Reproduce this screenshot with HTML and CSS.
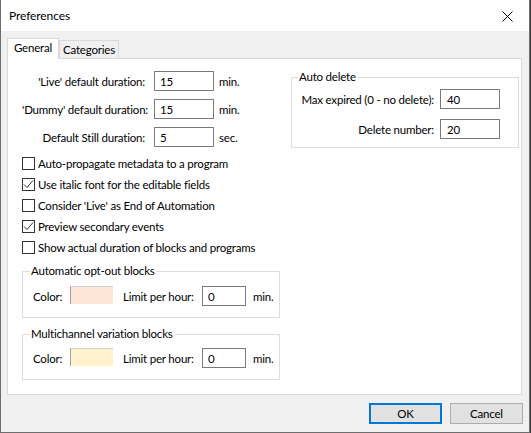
FILE: index.html
```html
<!DOCTYPE html>
<html>
<head>
<meta charset="utf-8">
<title>Preferences</title>
<link rel="stylesheet" href="styles.css">
</head>
<body>
<div class="window">
  <div class="titlebar">
    <span class="title">Preferences</span>
    <span class="close">
      <svg width="11" height="11" viewBox="0 0 11 11"><path d="M0.5 0.5 L10.5 10.5 M10.5 0.5 L0.5 10.5" stroke="#000" stroke-width="1" fill="none"/></svg>
    </span>
  </div>
  <div class="body">
    <div class="tabs">
      <div class="tab tab-active">General</div>
      <div class="tab">Categories</div>
    </div>
    <div class="panel">
      <div class="col-left">
        <div class="durations">
          <span class="lbl">'Live' default duration:</span><input class="field field-60" type="text" value="15"><span>min.</span>
          <span class="lbl">'Dummy' default duration:</span><input class="field field-60" type="text" value="15"><span>min.</span>
          <span class="lbl">Default Still duration:</span><input class="field field-60" type="text" value="5"><span>sec.</span>
        </div>
        <div class="checks">
          <div class="check"><span class="box"></span>Auto-propagate metadata to a program</div>
          <div class="check"><span class="box"><svg width="11" height="11" viewBox="0 0 11 11"><path d="M1 5.5 L4 8.5 L10 1.5" stroke="#333" stroke-width="1" fill="none"/></svg></span>Use italic font for the editable fields</div>
          <div class="check"><span class="box"></span>Consider 'Live' as End of Automation</div>
          <div class="check"><span class="box"><svg width="11" height="11" viewBox="0 0 11 11"><path d="M1 5.5 L4 8.5 L10 1.5" stroke="#333" stroke-width="1" fill="none"/></svg></span>Preview secondary events</div>
          <div class="check"><span class="box"></span>Show actual duration of blocks and programs</div>
        </div>
        <fieldset class="group group-first">
          <legend>Automatic opt-out blocks</legend>
          <div class="color-row">
            <span class="c-lbl">Color:</span>
            <span class="swatch swatch-pink"></span>
            <span class="l-lbl">Limit per hour:</span>
            <input class="field field-44" type="text" value="0">
            <span>min.</span>
          </div>
        </fieldset>
        <fieldset class="group group-second">
          <legend>Multichannel variation blocks</legend>
          <div class="color-row">
            <span class="c-lbl">Color:</span>
            <span class="swatch swatch-yellow"></span>
            <span class="l-lbl">Limit per hour:</span>
            <input class="field field-44" type="text" value="0">
            <span>min.</span>
          </div>
        </fieldset>
      </div>
      <div class="col-right">
        <fieldset class="autodel">
          <legend>Auto delete</legend>
          <div class="autodel-grid">
            <span class="lbl">Max expired (0 - no delete):</span><input class="field field-60 field-r" type="text" value="40">
            <span class="lbl">Delete number:</span><input class="field field-60 field-r" type="text" value="20">
          </div>
        </fieldset>
      </div>
    </div>
    <div class="buttons">
      <button class="btn btn-default">OK</button>
      <button class="btn">Cancel</button>
    </div>
  </div>
</div>
</body>
</html>
```
FILE: styles.css
```css
html, body {
  margin: 0;
  padding: 0;
  background: #3c3c3c;
}
body {
  font-family: Lato, "Liberation Sans", sans-serif;
  font-size: 11.5px;
  letter-spacing: -0.2px;
  color: #000;
}
.window {
  width: 530px;
  height: 433px;
  box-sizing: border-box;
  border: 1px solid #6e6e6e;
  border-top: none;
  background: #f0f0f0;
  display: flex;
  flex-direction: column;
}
.titlebar {
  height: 31px;
  background: #fff;
  display: flex;
  align-items: center;
  justify-content: space-between;
  padding: 0 16px 0 8px;
  flex: none;
}
.title {
  line-height: 16px;
  font-size: 12px;
  letter-spacing: -0.1px;
}
.close {
  display: flex;
  width: 11px;
  height: 11px;
  margin-top: 1px;
}
.body {
  flex: 1;
  padding: 7px 7px 0 6px;
  display: flex;
  flex-direction: column;
}
.tabs {
  display: flex;
  align-items: flex-end;
  height: 21px;
  margin-bottom: -1px;
  position: relative;
  z-index: 1;
}
.tab {
  box-sizing: border-box;
  height: 19px;
  border: 1px solid #d9d9d9;
  padding: 0 2px;
  line-height: 18px;
  background: #f0f0f0;
  width: 60px;
  text-align: center;
  white-space: nowrap;
}
.tab-active {
  height: 21px;
  width: 52px;
  background: #fff;
  border-bottom: none;
  line-height: 17px;
}
.panel {
  box-sizing: border-box;
  width: 515px;
  height: 337px;
  background: #fff;
  border: 1px solid #d9d9d9;
  padding: 12px 0 0 14px;
  display: flex;
  align-items: flex-start;
  gap: 11px;
}
.col-left {
  width: 258px;
  display: flex;
  flex-direction: column;
}
.durations {
  display: grid;
  grid-template-columns: 123px 60px auto;
  column-gap: 9px;
  row-gap: 8px;
  align-items: center;
}
.durations > span:nth-child(3n) {
  margin-left: -4px;
}
.lbl {
  text-align: right;
  white-space: nowrap;
}
.field {
  box-sizing: border-box;
  height: 20px;
  border: 1px solid #7a7a7a;
  background: #fff;
  font: inherit;
  letter-spacing: inherit;
  color: #000;
  padding: 1px 0 0 5px;
  margin: 0;
  outline: none;
}
.field-60 { width: 60px; }
.field-44 { width: 44px; }
.field-r { padding-left: 6px; }
.checks {
  margin-top: 6px;
  display: flex;
  flex-direction: column;
}
.check {
  height: 21px;
  display: flex;
  align-items: center;
  gap: 3px;
  white-space: nowrap;
}
.box {
  box-sizing: border-box;
  width: 13px;
  height: 13px;
  border: 1px solid #333;
  background: #fff;
  display: flex;
  flex: none;
}
.group {
  margin: 0;
  padding: 7px 10px 11px 10px;
  border: 1px solid #dcdcdc;
  min-width: 0;
  box-sizing: border-box;
  width: 258px;
}
.group legend {
  padding: 0 1px;
  margin-left: -3px;
  line-height: 16px;
}
.group-first { margin-top: 5px; }
.group-second { margin-top: 8px; padding-top: 6px; }
.color-row {
  display: flex;
  align-items: center;
  height: 20px;
  white-space: nowrap;
}
.c-lbl { width: 37px; flex: none; }
.swatch {
  box-sizing: border-box;
  width: 43px;
  height: 18px;
  flex: none;
  border-left: 1px solid #a0a0a0;
  border-top: 1px solid #d0d0d0;
  align-self: flex-start;
  margin-right: 10px;
}
.swatch-pink { background: #fce4d6; }
.swatch-yellow { background: #fff2cc; }
.l-lbl { width: 79px; flex: none; }
.color-row .field { margin-right: 7px; flex: none; }
.col-right {
  margin-top: -2px;
}
.autodel {
  margin: 0;
  width: 228px;
  box-sizing: border-box;
  border: 1px solid #dcdcdc;
  padding: 4px 18px 8px 6px;
  min-width: 0;
}
.autodel legend {
  padding: 0 1px;
  line-height: 16px;
}
.autodel-grid {
  display: grid;
  grid-template-columns: 136px 60px;
  column-gap: 6px;
  row-gap: 10px;
  align-items: center;
}
.buttons {
  display: flex;
  justify-content: flex-end;
  gap: 8px;
  padding: 8px 0 0 0;
  margin-right: -1px;
}
.btn {
  box-sizing: border-box;
  width: 73px;
  height: 21px;
  background: #e1e1e1;
  border: 1px solid #adadad;
  font: inherit;
  letter-spacing: inherit;
  color: #000;
  padding: 0;
  margin: 0;
}
.btn-default {
  border: 2px solid #0078d7;
}
```
